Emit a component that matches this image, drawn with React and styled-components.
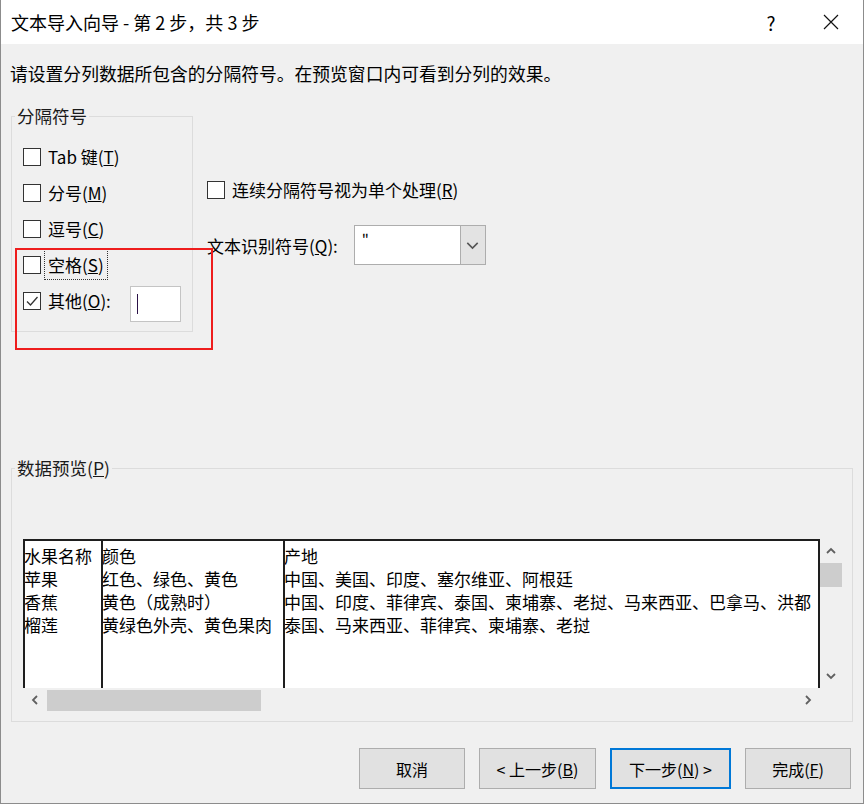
import React from 'react';
import styled, { createGlobalStyle } from 'styled-components';

const GlobalStyle = createGlobalStyle`
  html, body { margin: 0; padding: 0; background: #fff; }
  body { font-family: "Noto Sans CJK SC", "Microsoft YaHei", sans-serif; color: #000; }
`;

const Window = styled.div`
  position: relative;
  width: 864px;
  height: 804px;
  box-sizing: border-box;
  border: 1px solid #8c8c8c;
  border-top: none;
  background: #f0f0f0;
  display: flex;
  flex-direction: column;
`;

const TitleBar = styled.div`
  height: 44px;
  flex: none;
  background: #fff;
  display: flex;
  align-items: center;
  padding: 0 2px 0 10px;
  font-size: 18px;
`;

const TitleText = styled.div`
  flex: 1;
`;

const TitleControl = styled.div`
  width: ${(p) => p.w}px;
  height: 44px;
  display: flex;
  align-items: center;
  justify-content: center;
  font-size: 19px;
`;

const Body = styled.div`
  flex: 1;
  display: flex;
  flex-direction: column;
  padding: 17px 10px 14px 9px;
`;

const Instruction = styled.div`
  font-size: 17.8px;
  line-height: 24px;
`;

const TopRow = styled.div`
  display: flex;
  align-items: flex-start;
  margin-top: 20px;
`;

const GroupBox = styled.fieldset`
  margin: 0 0 0 1px;
  min-width: 0;
  box-sizing: border-box;
  width: ${(p) => (p.w ? `${p.w}px` : 'auto')};
  border: 1px solid #dcdcdc;
  padding: ${(p) => p.pad};
`;

const Legend = styled.legend`
  font-size: 17.5px;
  line-height: 22px;
  padding: 0 2px;
  margin-left: -8px;
  color: #1a1a1a;
`;

const CheckRow = styled.div`
  display: flex;
  align-items: center;
  height: ${(p) => p.h || 36}px;
  gap: 7px;
  font-size: 17px;
  line-height: 22px;
`;

const Box = styled.span`
  width: 18px;
  height: 18px;
  flex: none;
  box-sizing: border-box;
  border: 1px solid #333;
  background: #fff;
  display: flex;
  align-items: center;
  justify-content: center;
`;

const FocusLabel = styled.span`
  outline: 1px dotted #333;
  outline-offset: 1px;
  padding: 1px 2px;
  margin-left: -2px;
`;

const SmallInput = styled.div`
  width: 51px;
  height: 36px;
  box-sizing: border-box;
  margin: 6px 0 0 auto;
  border: 1px solid #c4c4c4;
  background: #fff;
  display: flex;
  align-items: center;
  padding-left: 6px;
`;

const Caret = styled.span`
  width: 1px;
  height: 20px;
  background: #2b1247;
`;

const RightColumn = styled.div`
  display: flex;
  flex-direction: column;
  gap: 24px;
  margin-left: 14px;
  padding-top: 74px;
`;

const ComboRow = styled.div`
  display: flex;
  align-items: center;
  font-size: 17px;
`;

const Combo = styled.div`
  width: 132px;
  height: 40px;
  box-sizing: border-box;
  margin-left: 16px;
  border: 1px solid #adadad;
  background: #fff;
  display: flex;
`;

const ComboValue = styled.div`
  flex: 1;
  padding: 4px 0 0 7px;
  font-size: 15px;
  line-height: 18px;
`;

const ComboButton = styled.div`
  width: 24px;
  background: #e3e3e3;
  border-left: 1px solid #adadad;
  display: flex;
  align-items: center;
  justify-content: center;
`;

const PreviewGrid = styled.div`
  display: grid;
  grid-template-columns: 1fr 22px;
  grid-template-rows: 149px 24px;
`;

const Table = styled.div`
  display: flex;
  background: #fff;
  border-top: 2px solid #1e1e1e;
  border-right: 2px solid #1e1e1e;
  overflow: hidden;
`;

const Column = styled.div`
  width: ${(p) => (p.w ? `${p.w}px` : 'auto')};
  flex: ${(p) => (p.w ? 'none' : 1)};
  min-width: 0;
  box-sizing: border-box;
  border-left: 2px solid #1e1e1e;
  padding-top: 3px;
  text-indent: -1px;
  font-size: 17px;
  line-height: 23px;
  white-space: nowrap;
  overflow: hidden;
`;

const VScroll = styled.div`
  display: flex;
  flex-direction: column;
`;

const HScroll = styled.div`
  display: flex;
  align-items: center;
`;

const ScrollButton = styled.div`
  width: ${(p) => p.w || 22}px;
  height: 24px;
  flex: none;
  display: flex;
  align-items: center;
  justify-content: center;
  margin-left: ${(p) => (p.end ? 'auto' : 0)};
  margin-top: ${(p) => (p.end && p.vertical ? 'auto' : 0)};
`;

const Thumb = styled.div`
  background: #cdcdcd;
  width: ${(p) => p.w}px;
  height: ${(p) => p.h}px;
  flex: none;
`;

const ButtonRow = styled.div`
  display: flex;
  justify-content: flex-end;
  gap: 14px;
  margin-top: 26px;
  margin-right: 2px;
`;

const Button = styled.div`
  width: ${(p) => p.w}px;
  height: 41px;
  box-sizing: border-box;
  border: ${(p) => (p.primary ? '2px solid #0078d7' : '1px solid #adadad')};
  background: #e1e1e1;
  display: flex;
  align-items: center;
  justify-content: center;
  font-size: 16px;
`;

const Annotation = styled.div`
  position: absolute;
  left: 14px;
  top: 248px;
  width: 198px;
  height: 102px;
  box-sizing: border-box;
  border: 2px solid #ee1d1d;
  pointer-events: none;
`;

const Check = () => (
  <svg width="14" height="14" viewBox="0 0 14 14">
    <path d="M2 7.5 L5.5 11 L12.5 3" fill="none" stroke="#333" strokeWidth="1.3" />
  </svg>
);

const Chevron = ({ dir = 'down', size = 10, color = '#606060', width = 1.8 }) => {
  const paths = {
    up: 'M1 7 L5 3 L9 7',
    down: 'M1 3 L5 7 L9 3',
    left: 'M7 1 L3 5 L7 9',
    right: 'M3 1 L7 5 L3 9',
  };
  return (
    <svg width={size} height={size} viewBox="0 0 10 10">
      <path d={paths[dir]} fill="none" stroke={color} strokeWidth={width} />
    </svg>
  );
};

const delimiters = [
  { label: <>Tab 键(<u>T</u>)</> },
  { label: <>分号(<u>M</u>)</> },
  { label: <>逗号(<u>C</u>)</> },
  { label: <FocusLabel>空格(<u>S</u>)</FocusLabel> },
];

const preview = [
  { w: 78, rows: ['水果名称', '苹果', '香蕉', '榴莲'] },
  { w: 182, rows: ['颜色', '红色、绿色、黄色', '黄色（成熟时）', '黄绿色外壳、黄色果肉'] },
  {
    rows: [
      '产地',
      '中国、美国、印度、塞尔维亚、阿根廷',
      '中国、印度、菲律宾、泰国、柬埔寨、老挝、马来西亚、巴拿马、洪都',
      '泰国、马来西亚、菲律宾、柬埔寨、老挝',
    ],
  },
];

export default function App() {
  return (
    <>
      <GlobalStyle />
      <Window>
        <TitleBar>
          <TitleText>文本导入向导 - 第 2 步，共 3 步</TitleText>
          <TitleControl w={46}>?</TitleControl>
          <TitleControl w={7} />
          <TitleControl w={60}>
            <svg width="16" height="16" viewBox="0 0 16 16">
              <path d="M1 1 L15 15 M15 1 L1 15" stroke="#111" strokeWidth="1.2" />
            </svg>
          </TitleControl>
        </TitleBar>

        <Body>
          <Instruction>请设置分列数据所包含的分隔符号。在预览窗口内可看到分列的效果。</Instruction>

          <TopRow>
            <GroupBox w={182} pad="12px 11px 12px 11px">
              <Legend>分隔符号</Legend>
              {delimiters.map((d, i) => (
                <CheckRow key={i}>
                  <Box />
                  <span>{d.label}</span>
                </CheckRow>
              ))}
              <CheckRow>
                <Box><Check /></Box>
                <span>其他(<u>O</u>):</span>
                <SmallInput><Caret /></SmallInput>
              </CheckRow>
            </GroupBox>

            <RightColumn>
              <CheckRow h={22}>
                <Box />
                <span>连续分隔符号视为单个处理(<u>R</u>)</span>
              </CheckRow>
              <ComboRow>
                <span>文本识别符号(<u>Q</u>):</span>
                <Combo>
                  <ComboValue>"</ComboValue>
                  <ComboButton>
                    <Chevron dir="down" size={13} color="#555" width={1.2} />
                  </ComboButton>
                </Combo>
              </ComboRow>
            </RightColumn>
          </TopRow>

          <GroupBox pad="60px 10px 9px 11px" style={{ marginTop: 125 }}>
            <Legend>数据预览(<u>P</u>)</Legend>
            <PreviewGrid>
              <Table>
                {preview.map((col, i) => (
                  <Column key={i} w={col.w}>
                    {col.rows.map((r) => (
                      <div key={r}>{r}</div>
                    ))}
                  </Column>
                ))}
              </Table>
              <VScroll>
                <ScrollButton>
                  <Chevron dir="up" />
                </ScrollButton>
                <Thumb w={22} h={24} />
                <ScrollButton end vertical>
                  <Chevron dir="down" />
                </ScrollButton>
              </VScroll>
              <HScroll>
                <ScrollButton w={24}>
                  <Chevron dir="left" />
                </ScrollButton>
                <Thumb w={214} h={21} />
                <ScrollButton w={24} end>
                  <Chevron dir="right" />
                </ScrollButton>
              </HScroll>
              <div />
            </PreviewGrid>
          </GroupBox>

          <ButtonRow>
            <Button w={106}>取消</Button>
            <Button w={117}>&lt; 上一步(<u>B</u>)</Button>
            <Button w={121} primary>下一步(<u>N</u>) &gt;</Button>
            <Button w={106}>完成(<u>F</u>)</Button>
          </ButtonRow>
        </Body>

        <Annotation />
      </Window>
    </>
  );
}
